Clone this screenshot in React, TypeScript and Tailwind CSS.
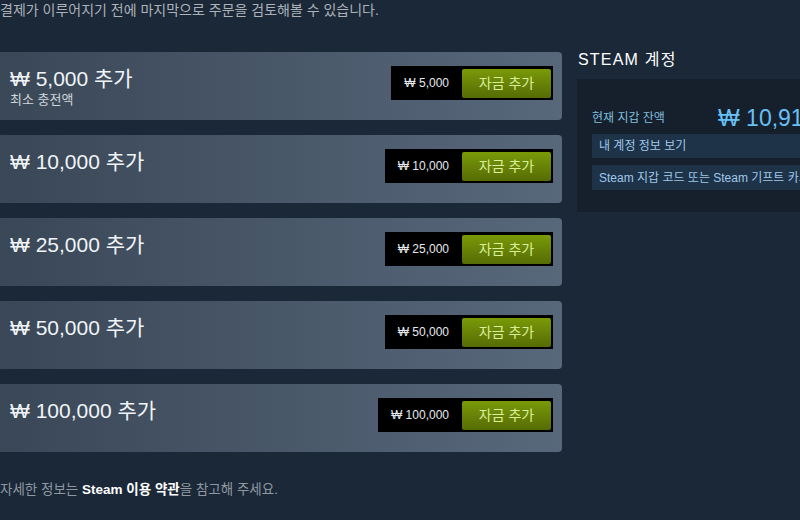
import React from 'react'

const font = {
    fontFamily: '"Liberation Sans", "Noto Sans CJK KR", Arial, sans-serif',
}

const amounts = [
    { value: '5,000', note: '최소 충전액' },
    { value: '10,000' },
    { value: '25,000' },
    { value: '50,000' },
    { value: '100,000' },
]

const AmountCard = ({ value, note }: { value: string; note?: string }) => (
    <div className="flex h-[68px] items-start justify-between rounded-r-[4px] bg-gradient-to-r from-[#3a4757] to-[#58687b] pl-[10px] pr-[9px] pt-[14px]">
        <div className="pt-[1px]">
            <div className="text-[21px] leading-[24px] text-[#f0f4f7]">
                ₩ {value} 추가
            </div>
            {note && (
                <div className="mt-[1px] text-[13px] leading-[15px] text-[#d0d6dc]">
                    {note}
                </div>
            )}
        </div>
        <div className="flex h-[34px] items-center bg-black pl-[13px] pr-[2px]">
            <span className="mr-[13px] text-[12px] text-[#e6eaee]">
                ₩ {value}
            </span>
            <button className="h-[29px] w-[89px] rounded-[2px] bg-gradient-to-b from-[#7a9a08] to-[#566c05] text-[14px] text-[#d9ef9a]">
                자금 추가
            </button>
        </div>
    </div>
)

export default function App() {
    return (
        <div
            className="h-[520px] w-[800px] overflow-hidden bg-[#1b2838]"
            style={font}
        >
            <div className="pt-[1px] text-[14px] leading-[19px] text-[#acb2b8]">
                결제가 이루어지기 전에 마지막으로 주문을 검토해볼 수 있습니다.
            </div>
            <div className="mt-[32px] flex">
                <div className="flex w-[562px] shrink-0 flex-col gap-[15px]">
                    {amounts.map((a) => (
                        <AmountCard key={a.value} value={a.value} note={a.note} />
                    ))}
                    <div className="mt-[13px] text-[13.5px] text-[#8f98a0]">
                        자세한 정보는{' '}
                        <span className="font-bold text-white">
                            Steam 이용 약관
                        </span>
                        을 참고해 주세요.
                    </div>
                </div>
                <div className="ml-[15px] w-[260px] shrink-0">
                    <div className="-mt-[2px] ml-[1px] text-[16px] leading-[20px] tracking-[1.2px] text-white">
                        STEAM 계정
                    </div>
                    <div className="mt-[9px] h-[133px] bg-[#16202d] pl-[15px] pt-[26px]">
                        <div className="flex items-center">
                            <span className="w-[126px] text-[12px] text-[#7fbedd]">
                                현재 지갑 잔액
                            </span>
                            <span className="whitespace-nowrap text-[23px] leading-[26px] text-[#67c1f5]">
                                ₩ 10,910
                            </span>
                        </div>
                        <div className="mt-[3px] flex h-[24px] items-center bg-[#1e3248] pl-[7px] text-[12px] text-[#9fc9e8]">
                            내 계정 정보 보기
                        </div>
                        <div className="mt-[7px] flex h-[25px] items-center whitespace-nowrap bg-[#1e3248] pl-[7px] text-[12px] text-[#9fc9e8]">
                            Steam 지갑 코드 또는 Steam 기프트 카드 사용하기
                        </div>
                    </div>
                </div>
            </div>
        </div>
    )
}
